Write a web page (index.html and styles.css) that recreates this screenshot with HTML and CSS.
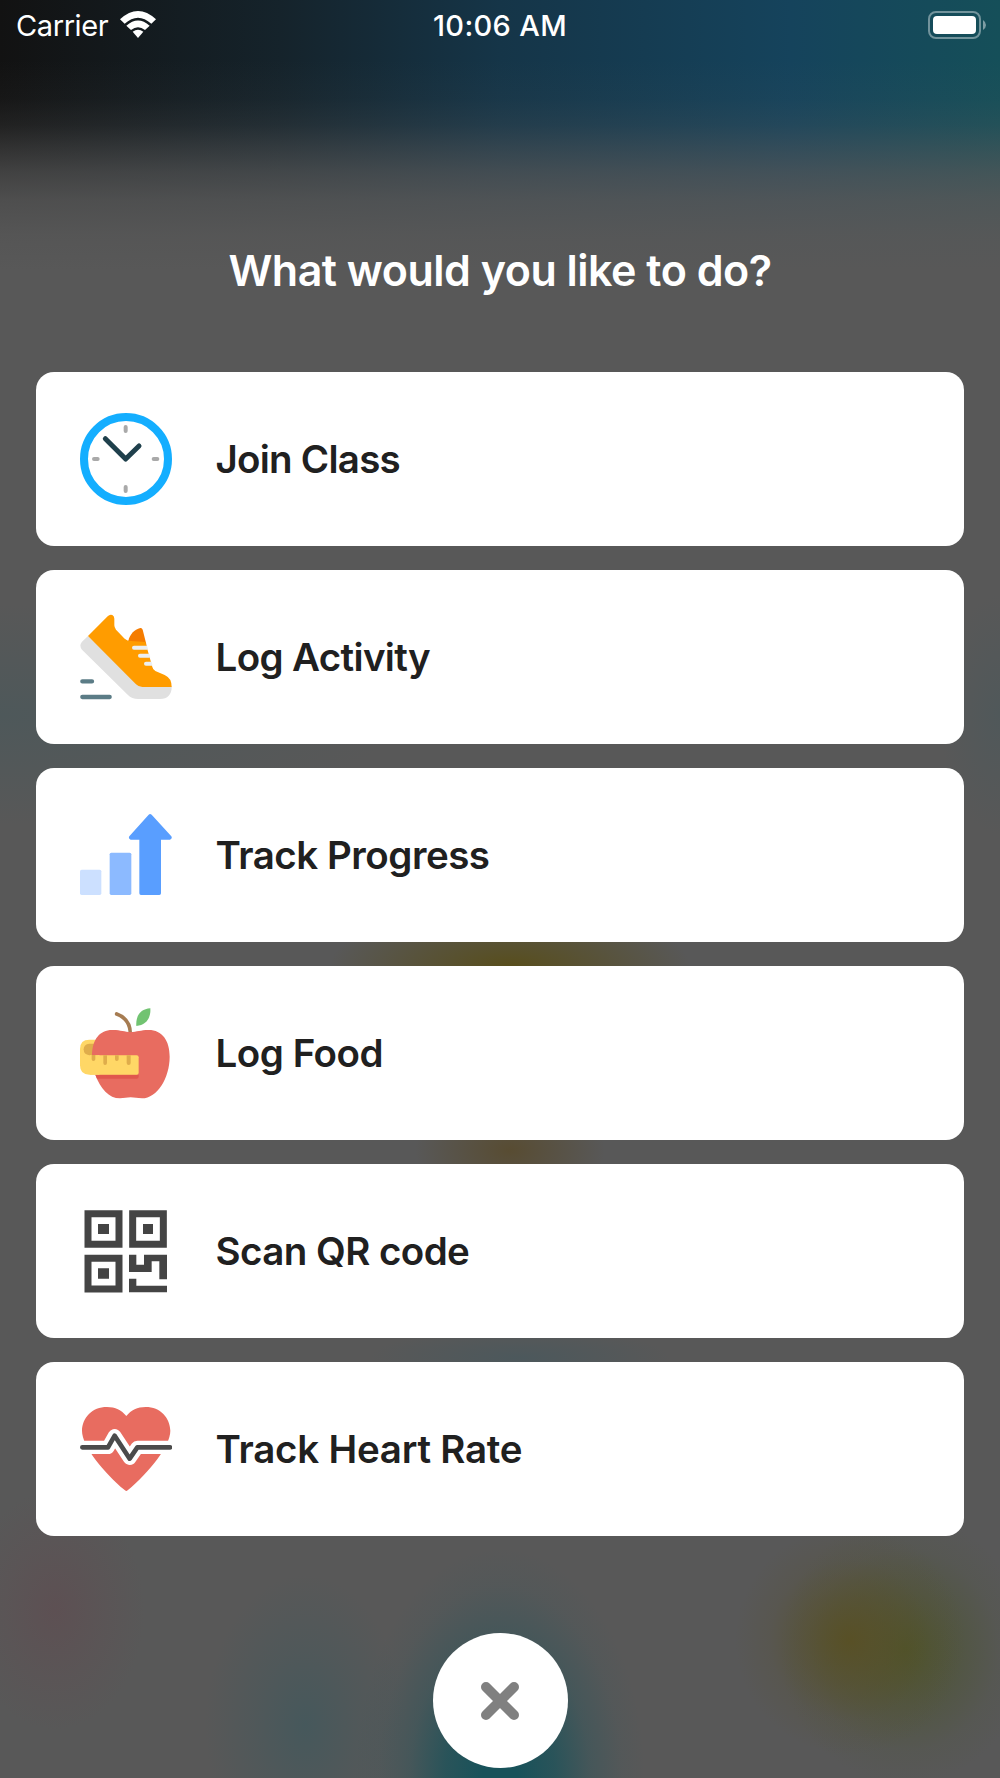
FILE: index.html
```html
<!DOCTYPE html>
<html lang="en">
<head>
    <meta charset="UTF-8">
    <meta name="viewport" content="width=device-width, initial-scale=1.0">
    <title>What would you like to do?</title>
    <link rel="stylesheet" href="styles.css">
</head>
<body>
    <header class="status-bar">
        <div class="carrier">
            <span>Carrier</span>
            <svg class="wifi" viewBox="0 0 108 81">
                <path d="M0 25Q54 -25 108 25L94 38Q54 2 14 38Z"/>
                <path d="M19 44Q54 13 89 44L75 57Q54 40 33 57Z"/>
                <path d="M38 62Q54 50 70 62L54 81Z"/>
            </svg>
        </div>
        <div class="time">10:06 AM</div>
        <svg class="battery" viewBox="0 0 59 28">
            <rect class="battery-outline" x="1" y="1" width="51" height="26" rx="7"/>
            <rect class="battery-level" x="5" y="5" width="43" height="18" rx="4"/>
            <path class="battery-cap" d="M55 9Q58 11 58 14Q58 17 55 19Z"/>
        </svg>
    </header>

    <main class="menu">
        <h1 class="title">What would you like to do?</h1>

        <button class="card">
            <svg class="icon" viewBox="60 54 276 276">
                <circle cx="198" cy="192" r="126" fill="none" stroke="#14aeff" stroke-width="24"/>
                <path d="M197 96V108M197 276V288M102 192H113M281 192H292" fill="none" stroke="#a9a9a9" stroke-width="12" stroke-linecap="round"/>
                <path d="M136 131L197 192L237 153" fill="none" stroke="#1f404c" stroke-width="15" stroke-linecap="round" stroke-linejoin="round"/>
            </svg>
            <span class="label join">Join Class</span>
        </button>

        <button class="card">
            <svg class="icon" viewBox="60 48 276 276">
                <path d="M205 138C209 118 223 104 241 99Q246 98 248 104L260 152H215Z" fill="#f57c00"/>
                <path d="M84 123L66 140Q56 151 66 164L203 299Q216 312 234 312H300C324 312 336 296 335 274L240 270Z" fill="#e0e0e0"/>
                <path d="M84 123L143 64Q149 57 157 60Q163 63 163 71V91Q163 98 168 104L194 131Q202 138 212 138L256 141L277 216Q279 224 286 228L314 240Q335 249 335 276H247Q236 276 228 268Z" fill="#ff9c00"/>
                <path d="M222 158H261M240 182H267M258 206H275" fill="none" stroke="#eceff1" stroke-width="12" stroke-linecap="round"/>
                <path d="M260 148L281 223H292L266 145Z" fill="#fff"/>
                <path d="M67 259H96M67 306H149" fill="none" stroke="#5b7c86" stroke-width="13" stroke-linecap="round"/>
            </svg>
            <span class="label activity">Log Activity</span>
        </button>

        <button class="card">
            <svg class="icon" viewBox="60 42 276 276">
                <rect x="60" y="224" width="64" height="76" rx="5" fill="#cce0ff"/>
                <rect x="149" y="173" width="65" height="127" rx="5" fill="#8cbaff"/>
                <path d="M266 59Q270 55 275 59L334 124Q338 131 330 134H303V295Q303 300 298 300H243Q238 300 238 295V134H212Q204 131 208 124Z" fill="#599eff"/>
            </svg>
            <span class="label progress">Track Progress</span>
        </button>

        <button class="card">
            <svg class="icon" viewBox="60 51 276 276">
                <path d="M88 149H116V254H88Q60 254 60 226V177Q60 149 88 149Z" fill="#ffd766"/>
                <path d="M110 161H88Q71 163 71 178Q71 194 88 196H110Z" fill="#dfad4b"/>
                <path d="M170 72Q211 87 211 132" fill="none" stroke="#a67c52" stroke-width="11" stroke-linecap="round"/>
                <path d="M229 108C227 76 242 57 271 55C273 84 259 105 229 108Z" fill="#71c371"/>
                <path d="M96 196C97 146 121 118 160 120C182 120 194 126 212 126C230 126 243 120 264 120C306 119 329 151 329 200C329 263 292 325 246 325C232 325 224 322 212 322C200 322 193 325 180 325C147 325 121 295 106 254H118V196Z" fill="#e86c60"/>
                <path d="M106 254H236V260Q236 266 230 266H111Z" fill="#e0574d"/>
                <path d="M90 196H230Q236 196 236 202V248Q236 254 230 254H90Z" fill="#ffd766"/>
                <path d="M95 195H106V208Q106 213 100 213Q95 213 95 208ZM130 196H141V219Q141 225 135 225Q130 225 130 219ZM165 196H176V208Q176 213 170 213Q165 213 165 208ZM200 196H212V219Q212 225 206 225Q200 225 200 219Z" fill="#dfad4b"/>
            </svg>
            <span class="label food">Log Food</span>
        </button>

        <button class="card">
            <svg class="icon" viewBox="60 45 276 276">
                <path d="M84 71H177V163H84ZM218 71H310V163H218ZM84 205H177V297H84Z" fill="none" stroke="#444" stroke-width="21"/>
                <path d="M114 102H147V132H114ZM249 102H279V132H249ZM114 235H147V266H114Z" fill="#444"/>
                <path d="M207 194H229V224H252V194H321V268H298V214H275V246H207ZM207 266H229V287H321V307H207Z" fill="#444"/>
            </svg>
            <span class="label qr">Scan QR code</span>
        </button>

        <button class="card">
            <svg class="icon" viewBox="60 39 276 276">
                <path d="M199 78C214 60 232 51 257 51C301 51 330 83 331 122C331 168 268 246 203 301Q199 305 195 301C130 246 66 168 66 122C67 83 96 51 141 51C166 51 184 60 199 78Z" fill="#e86c60"/>
                <path d="M60 172H144L164 137L209 205L232 172H336" fill="none" stroke="#fff" stroke-width="40" stroke-linejoin="round"/>
                <path d="M67 172H144L164 137L209 206L232 172H330" fill="none" stroke="#4b4b4b" stroke-width="14" stroke-linecap="round" stroke-linejoin="round"/>
            </svg>
            <span class="label heart">Track Heart Rate</span>
        </button>
    </main>

    <button class="close" aria-label="Close">
        <svg class="cross" viewBox="0 0 40 40">
            <path d="M6 6L34 34M34 6L6 34"/>
        </svg>
    </button>
</body>
</html>
```
FILE: styles.css
```css
* {
    box-sizing: border-box;
}

body {
    margin: 0;
    height: 1778px;
    display: flex;
    flex-direction: column;
    align-items: center;
    overflow: hidden;
    font-family: Inter, "Liberation Sans", sans-serif;
    color: #ffffff;
    /* blurred page behind the menu */
    background:
        radial-gradient(ellipse 145px 230px at 500px 1778px, rgb(24, 82, 90) 12%, rgba(26, 82, 90, 0.75) 38%, rgba(34, 84, 92, 0.35) 62%, rgba(44, 86, 94, 0.1) 84%, rgba(60, 88, 92, 0) 100%),
        radial-gradient(ellipse 100px 150px at 305px 1725px, rgba(68, 88, 92, 0.9), rgba(68, 88, 92, 0.4) 50%, rgba(66, 88, 94, 0)),
        radial-gradient(ellipse 90px 120px at 55px 1610px, rgb(93, 80, 83), rgba(94, 80, 83, 0.4) 55%, rgba(94, 80, 83, 0)),
        radial-gradient(ellipse 115px 115px at 850px 1640px, rgb(88, 80, 38), rgba(88, 80, 40, 0.6) 35%, rgba(88, 80, 48, 0.2) 70%, rgba(88, 80, 50, 0)),
        radial-gradient(ellipse 125px 135px at 905px 1650px, rgb(76, 84, 42), rgba(76, 84, 48, 0.55) 40%, rgba(76, 84, 54, 0.15) 75%, rgba(76, 84, 60, 0)),
        radial-gradient(ellipse 180px 60px at 510px 966px, rgb(88, 78, 28), rgba(88, 78, 32, 0.55) 50%, rgba(88, 78, 40, 0)),
        radial-gradient(ellipse 95px 60px at 510px 1150px, rgba(88, 76, 50, 1), rgba(88, 76, 50, 0)),
        radial-gradient(ellipse 150px 30px at 520px 1358px, rgba(76, 88, 92, 1), rgba(76, 88, 92, 0)),
        radial-gradient(ellipse 400px 110px at 0 715px, rgba(78, 88, 90, 1), rgba(78, 88, 90, 0)),
        radial-gradient(ellipse 60px 120px at 1000px 715px, rgba(80, 88, 90, 1), rgba(80, 88, 90, 0)),
        linear-gradient(to bottom, rgba(88, 88, 88, 0) 60px, rgba(88, 88, 88, 0.07) 98px, rgba(88, 88, 88, 0.22) 125px, rgba(88, 88, 88, 0.45) 148px, rgba(88, 88, 88, 0.68) 172px, rgba(88, 88, 88, 0.86) 200px, rgba(88, 88, 88, 0.96) 235px, #585858 270px),
        linear-gradient(to right, #121212 0, #15232b 28%, #153548 50%, #15435c 79%, #154f59 100%);
}

.status-bar {
    width: 100%;
    height: 50px;
    padding: 0 16px;
    display: grid;
    grid-template-columns: 1fr auto 1fr;
    align-items: center;
    font-size: 29px;
}

.carrier {
    display: flex;
    align-items: center;
    gap: 12px;
    letter-spacing: -0.4px;
}

.wifi {
    width: 36px;
    height: 27px;
    margin-bottom: 2px;
    fill: #ffffff;
}

.time {
    font-weight: 500;
    letter-spacing: 0.35px;
}

.battery {
    width: 59px;
    height: 28px;
    margin-right: -3px;
    margin-bottom: 1px;
    justify-self: end;
}

.battery-outline {
    fill: none;
    stroke: rgba(255, 255, 255, 0.4);
    stroke-width: 2;
}

.battery-level {
    fill: #ffffff;
}

.battery-cap {
    fill: rgba(255, 255, 255, 0.45);
}

.menu {
    width: 928px;
    padding-top: 193px;
    display: flex;
    flex-direction: column;
    gap: 24px;
}

.title {
    margin: 0 0 51px;
    height: 54px;
    line-height: 54px;
    font-size: 43px;
    font-weight: 580;
    letter-spacing: -0.5px;
    text-align: center;
}

.card {
    height: 174px;
    padding: 0 44px;
    display: flex;
    align-items: center;
    gap: 43.5px;
    border: none;
    border-radius: 18px;
    background-color: #ffffff;
    color: #202020;
    font-family: inherit;
    font-size: 38.5px;
    font-weight: 580;
    cursor: pointer;
}

.icon {
    width: 92px;
    height: 92px;
    flex: none;
}

.label {
    white-space: nowrap;
}

.join {
    letter-spacing: -0.75px;
}

.activity {
    letter-spacing: -0.64px;
}

.progress {
    letter-spacing: -0.47px;
}

.food {
    letter-spacing: -0.46px;
}

.qr {
    letter-spacing: -0.55px;
}

.heart {
    letter-spacing: -0.23px;
}

.close {
    width: 135px;
    height: 135px;
    margin-top: 97px;
    padding: 0;
    display: flex;
    align-items: center;
    justify-content: center;
    border: none;
    border-radius: 50%;
    background-color: #ffffff;
    cursor: pointer;
}

.cross {
    width: 40px;
    height: 40px;
    fill: none;
    stroke: #808080;
    stroke-width: 10;
    stroke-linecap: round;
}
```
